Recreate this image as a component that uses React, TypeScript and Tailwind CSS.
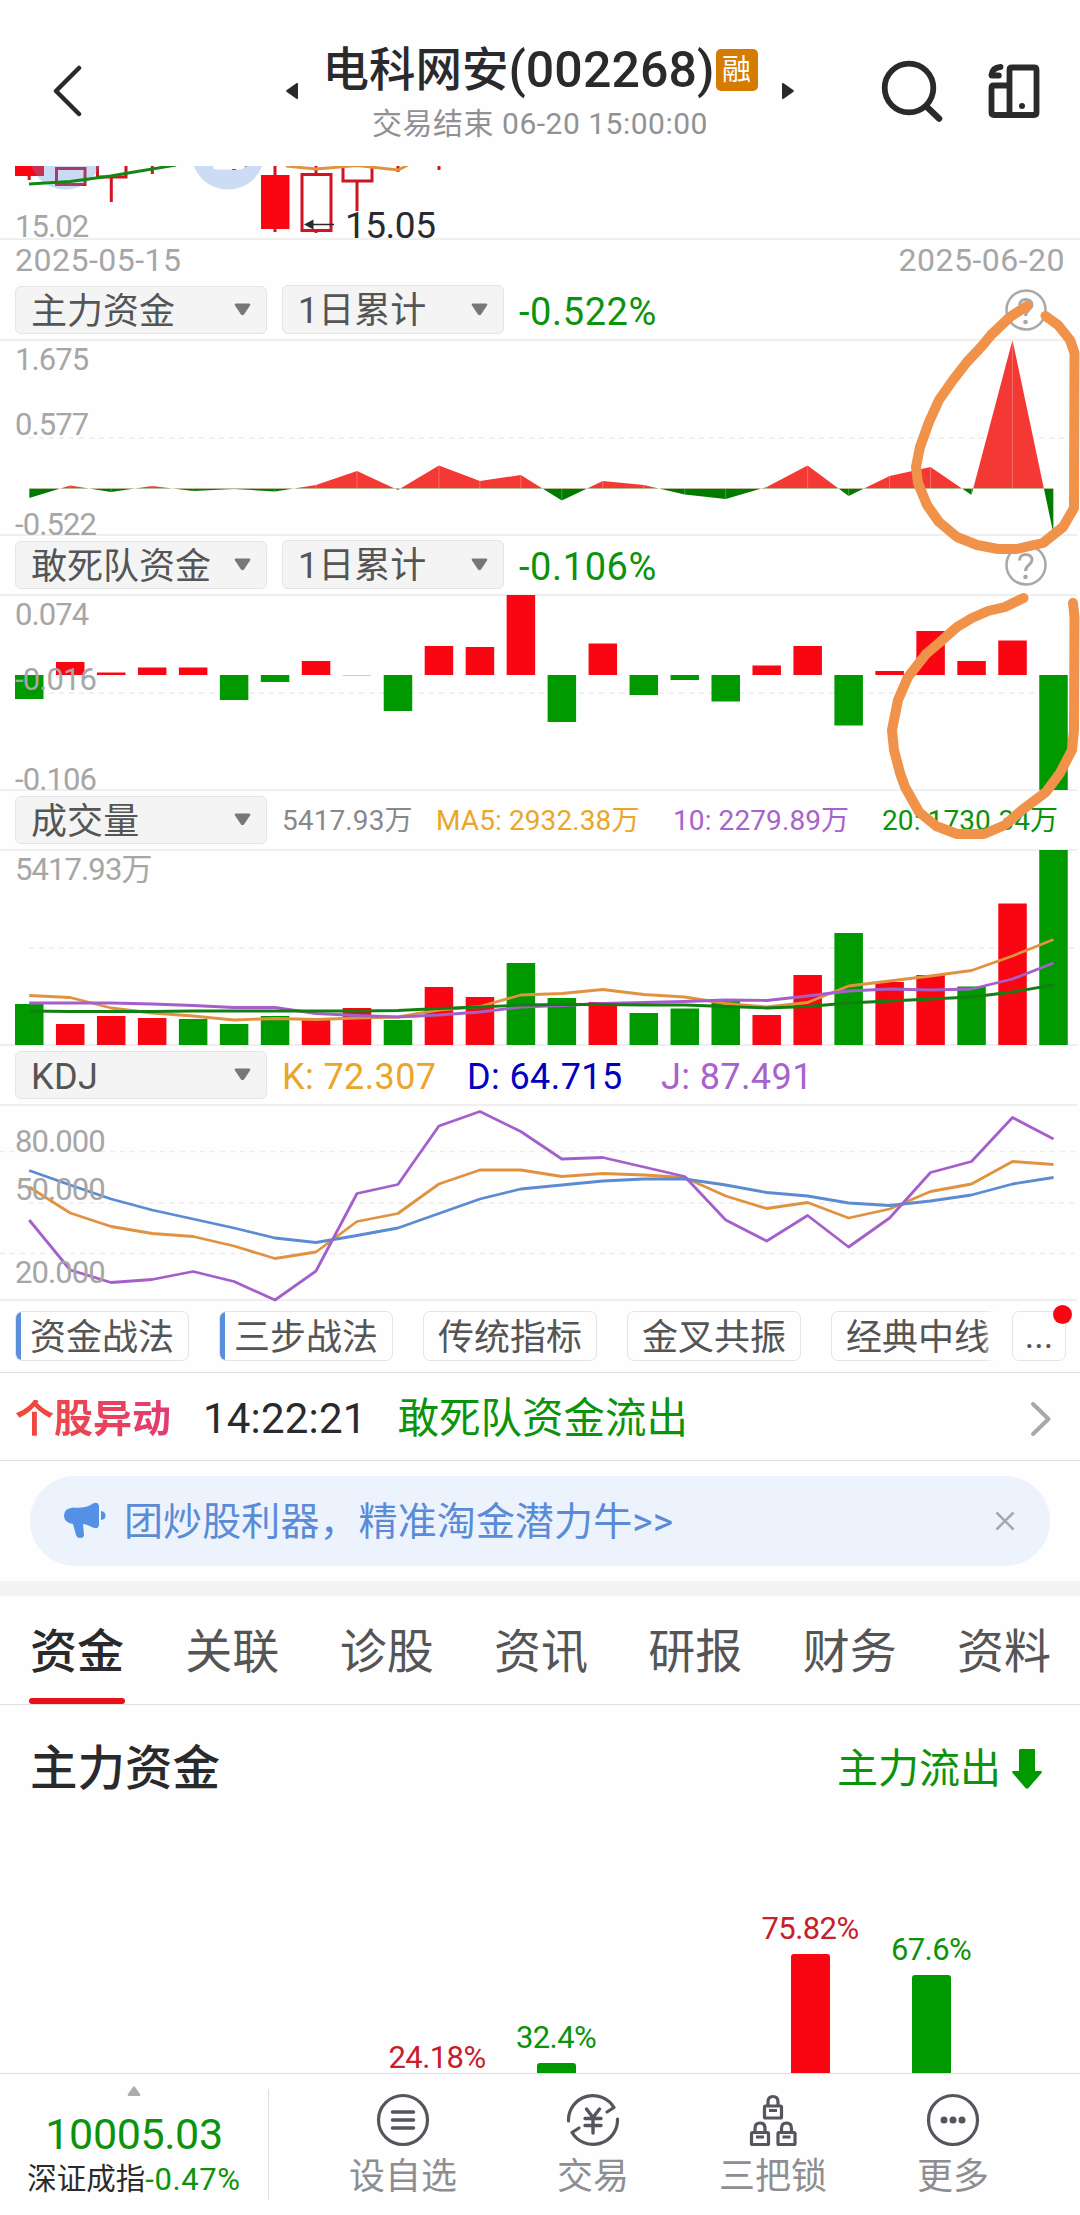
import type { ReactNode } from "react";
import clsx from "clsx";

const RED = "#fa0512";
const GREEN = "#009900";
const ORANGE = "#e1923f";
const PURPLE = "#a45fcb";
const BLUE = "#5b8bd0";

const CHART_H = 195;
const STEP = 40.97;
const cx = (i: number) => 29.2 + i * STEP;

const toPoints = (ys: number[]) => ys.map((y, i) => `${cx(i).toFixed(1)},${y}`).join(" ");

// main fund flow, zero line at 148.5
const fundFlow = [
  158, 145.5, 152, 146, 151, 149, 151.5, 145, 131, 150, 125.5, 141, 135, 160.5, 141, 145, 154.5,
  159, 147, 125.5, 156, 136, 127, 155, 0, 194,
];

// y of the free end of each bar, zero line at 80
const squadFlow = [
  104, 67, 77.5, 72.5, 72.5, 105, 87, 66, 80.3, 116, 51, 52, 0, 127, 48.5, 100, 85, 106.5, 70.5, 51,
  130.5, 76, 36, 66, 45.5, 195,
];

const volumes: [number, "r" | "g"][] = [
  [154, "g"], [174, "r"], [166, "r"], [168, "r"], [169, "g"], [174, "g"], [166, "g"], [170, "r"],
  [158, "r"], [170, "g"], [137, "r"], [147, "r"], [113, "g"], [148, "g"], [152, "r"], [163, "g"],
  [158.5, "g"], [151, "g"], [165, "r"], [125, "r"], [83, "g"], [132, "r"], [125, "r"], [136.5, "g"],
  [53.5, "r"], [0, "g"],
];

const ma5 = [
  145.5, 147.5, 158, 163, 166, 170, 168.5, 169.5, 168, 167, 160, 156.5, 145, 143.5, 139.5, 144.5,
  147, 153.5, 157, 152.5, 136, 131, 126, 120.5, 106, 89.5,
];
const ma10 = [
  153, 153, 153, 154, 155.5, 157.5, 157.5, 163.5, 165.5, 167, 165, 162, 157, 155.5, 153.5, 152.5,
  151.5, 150, 150.5, 146, 141, 139, 140, 139, 129, 113,
];
const ma20 = [
  161, 161.5, 161.5, 161.5, 161, 161, 161, 161, 161, 160.5, 158.5, 157, 155, 154.5, 154.5, 155,
  155, 156.5, 158, 156.5, 153, 151, 149, 147, 142, 135,
];

const kLine = [
  82, 108, 121.5, 128.5, 131.5, 141, 153.5, 147, 116.5, 108.5, 79, 65, 65, 71.5, 68.5, 70, 72.5,
  91, 103.5, 97.5, 113, 104, 86.5, 79, 56.5, 59.5,
];
const dLine = [
  65.5, 80, 94, 105, 114, 123, 133, 137.5, 130.5, 123, 108.5, 94, 84, 80, 76, 74, 74, 80, 87.5, 91,
  98, 100.5, 96, 90, 79, 72.5,
];
const jLine = [
  115, 165, 177.5, 174.5, 166.5, 176.5, 195, 166, 88.5, 79.5, 21, 6.5, 26.5, 54, 52.5, 62, 71.5,
  115, 136, 110.5, 142, 113, 67.5, 56.5, 12.5, 34,
];

const chips = [
  { name: "资金战法", marked: true },
  { name: "三步战法", marked: true },
  { name: "传统指标", marked: false },
  { name: "金叉共振", marked: false },
];

const tabs = ["资金", "关联", "诊股", "资讯", "研报", "财务", "资料"];

function Select({ label, wide }: { label: string; wide?: boolean }) {
  return (
    <div
      className={clsx(
        "flex items-center justify-between rounded-[6px] border border-[#e4e4e4] bg-[#f4f4f4] pl-[15px] pr-[15px] text-[36px] leading-none text-[#555]",
        wide ? "h-12 w-[252px]" : "-mt-px h-[49px] w-[222px]"
      )}>
      <span className="mt-[3px]">{label}</span>
      <svg width="17" height="13" viewBox="0 0 17 13" className="-mt-px">
        <path d="M2 0.5h13q2 0 1 2l-6 9q-1.500 1.500-3 0l-6-9q-1-2 1-2z" fill="#777779" />
      </svg>
    </div>
  );
}

function Help() {
  return (
    <svg width="42" height="42" viewBox="0 0 42 42" fill="none" stroke="#a8a8a8" className="ml-auto mr-[33px]">
      <circle cx="21" cy="21" r="19.500" strokeWidth="2.500" />
      <path d="M14.500 16.500c0-8 12.500-8 12.500-.5 0 5-6.500 5-6.500 11" strokeWidth="3" />
      <circle cx="20.500" cy="33" r="2.300" fill="#a8a8a8" stroke="none" />
    </svg>
  );
}

function Chart({ children, labels }: { children: ReactNode; labels: ReactNode }) {
  return (
    <div className="relative h-[195px]">
      <svg width="1080" height={CHART_H} className="block overflow-visible" fill="none">
        <path d="M0 0H1077M0 195H1077" stroke="#efefef" strokeWidth="2" />
        {children}
      </svg>
      {labels}
    </div>
  );
}

function AxisLabel({ className, children }: { className: string; children: ReactNode }) {
  return (
    <span className={clsx("absolute left-[15px] text-[31px] leading-none tracking-[-0.900px] text-[#a6a6a6]", className)}>
      {children}
    </span>
  );
}

function Dashes({ y, from = 29 }: { y: number; from?: number }) {
  return (
    <line x1={from} x2="1076" y1={y} y2={y} stroke="#ececec" strokeWidth="1.500" strokeDasharray="5 5" />
  );
}

function Bar({ i, y0, y1, color }: { i: number; y0: number; y1: number; color: string }) {
  return (
    <rect x={cx(i) - 14.2} y={Math.min(y0, y1)} width="28.500" height={Math.abs(y1 - y0)} fill={color} />
  );
}

function Line({ ys, color }: { ys: number[]; color: string }) {
  return <polyline points={toPoints(ys)} stroke={color} strokeWidth="2.800" strokeLinejoin="round" />;
}

function Header() {
  return (
    <header className="grid h-[166px] grid-cols-[286px_508px_286px] text-[#2a2a2c]">
      <svg width="30" height="54" viewBox="0 0 30 54" fill="none" className="ml-[53px] mt-16">
        <path d="M26 4L3 27l23 23" stroke="currentColor" strokeWidth="4.500" strokeLinecap="round" strokeLinejoin="round" />
      </svg>

      <div className="flex justify-between">
        <svg width="12" height="16" viewBox="0 0 12 16" className="mt-[83px]">
          <path d="M12 1v14q0 2-2 .5L.8 9Q-.5 8 .8 7L10 .5Q12-1 12 1z" fill="currentColor" />
        </svg>
        <div className="flex flex-col items-center pt-[43px]">
          <h1 className="flex h-[54px] items-center whitespace-nowrap text-[46.500px] font-medium leading-none">
            电科网安
            <span className="text-[50px] tracking-[0.100px]">(002268)</span>
            <span className="ml-px flex h-[42px] w-[42px] items-center justify-center rounded-[5px] bg-[#d57c00] text-[29px] font-normal text-white">
              融
            </span>
          </h1>
          <p className="mt-[12px] whitespace-nowrap text-[30px] leading-none tracking-[0.500px] text-[#919194]">
            交易结束 06-20 15:00:00
          </p>
        </div>
        <svg width="12" height="16" viewBox="0 0 12 16" className="mt-[83px]">
          <path d="M0 1v14q0 2 2 .5L11.200 9q1.300-1 0-2L2 .5Q0-1 0 1z" fill="currentColor" />
        </svg>
      </div>

      <div className="flex pl-[87px] pt-[60px]">
        <svg width="64" height="64" viewBox="0 0 64 64" fill="none" stroke="currentColor">
          <circle cx="28" cy="28" r="24.300" strokeWidth="5.800" />
          <path d="M46.500 47.500L58 58.500" strokeWidth="6.500" strokeLinecap="round" />
        </svg>
        <svg width="58" height="60" viewBox="0 0 58 60" fill="none" stroke="currentColor" strokeWidth="5.800" className="ml-[40px]">
          <path d="M24.500 55V10q0-2.500 2.500-2.500h22q2.500 0 2.500 2.500v42.500q0 2.500-2.500 2.500H9q-2.500 0-2.500-2.500V28q0-2.500 2.500-2.500h15.500" />
          <circle cx="37" cy="46" r="3" fill="currentColor" stroke="none" />
          <path d="M15.500 7Q7.500 7.500 6.500 15" strokeLinecap="round" />
          <path d="M6.800 15.500h7" strokeLinecap="round" />
        </svg>
      </div>
    </header>
  );
}

// lowest strip of the candle chart, the rest is scrolled away
function CandleStrip() {
  return (
    <div className="relative h-[72px]">
      <svg width="1080" height="72" viewBox="0 166 1080 72" className="block overflow-hidden" fill="none">
        <rect x="15" y="160" width="29" height="16" fill={RED} />
        <g stroke="#d01522" strokeWidth="3">
          <path d="M29.200 176V180M111.300 177V202M152.300 166V174M275 166V232M316 166V174M316 231V233M357 181V211M398 166V172M439 166V170" />
          <rect x="56.500" y="168.500" width="28.500" height="16" />
          <rect x="97.500" y="150" width="28.500" height="27" />
          <rect x="302" y="174.500" width="29" height="56" />
          <rect x="343" y="150" width="29" height="31" />
        </g>
        <rect x="261" y="175" width="28.500" height="54" fill={RED} />
        <circle cx="65.500" cy="153" r="36.600" fill="#5a8fe0" fillOpacity="0.320" />
        <circle cx="228" cy="153" r="36.600" fill="#ccdcf5" />
        <path d="M213 166h31q0 3.500-4 3.500h-23q-4 0-4-3.500z" fill="#fff" />
        <path d="M232 169.500h4M245 166h2" stroke="#b03a62" />
        <polyline points="29,184 70,181.500 111,176 134,172 176,165" stroke="#118811" strokeWidth="2.800" />
        <polyline points="286,166 316,169 357,165.500 398,170 408,165" stroke={ORANGE} strokeWidth="2.800" />
        <path d="M312 224.500h22" stroke="#2a2a2c" strokeWidth="1.500" />
        <path d="M304 224.500l9.500-5v10z" fill="#2a2a2c" />
      </svg>
      <AxisLabel className="top-[45px]">15.02</AxisLabel>
      <span className="absolute left-[345px] top-[41px] text-[37px] leading-none tracking-[-0.500px] text-[#2a2a2c]">
        15.05
      </span>
    </div>
  );
}

function FundFlowChart() {
  const outline = `29.200,148.500 ${toPoints(fundFlow)} ${cx(25)},148.500`;
  return (
    <Chart
      labels={
        <>
          <AxisLabel className="top-[4px]">1.675</AxisLabel>
          <AxisLabel className="top-[69px]">0.577</AxisLabel>
          <AxisLabel className="top-[169px]">-0.522</AxisLabel>
        </>
      }>
      <clipPath id="inflow">
        <rect width="1080" height="148.500" />
      </clipPath>
      <clipPath id="outflow">
        <rect y="148.500" width="1080" height="47" />
      </clipPath>
      <Dashes y={98} />
      <polygon points={outline} fill="#f43833" clipPath="url(#inflow)" />
      <polygon points={outline} fill="#007b00" clipPath="url(#outflow)" />
      {fundFlow.map((y, i) => (
        <line key={i} x1={cx(i)} x2={cx(i)} y1={y} y2="148.500" stroke="#fff" strokeOpacity="0.350" strokeWidth="0.800" />
      ))}
    </Chart>
  );
}

function SquadChart() {
  return (
    <Chart
      labels={
        <>
          <AxisLabel className="top-[4px]">0.074</AxisLabel>
          <AxisLabel className="top-[69px]">-0.016</AxisLabel>
          <AxisLabel className="top-[169px]">-0.106</AxisLabel>
        </>
      }>
      <Dashes y={98} />
      {squadFlow.map((y, i) => (
        <Bar key={i} i={i} y0={80} y1={y} color={y < 80 ? RED : GREEN} />
      ))}
    </Chart>
  );
}

function VolumeChart() {
  return (
    <Chart labels={<AxisLabel className="top-[4px]">5417.93万</AxisLabel>}>
      <Dashes y={98} />
      {volumes.map(([y, side], i) => (
        <Bar key={i} i={i} y0={CHART_H} y1={y} color={side === "r" ? RED : GREEN} />
      ))}
      <Line ys={ma5} color={ORANGE} />
      <Line ys={ma10} color={PURPLE} />
      <Line ys={ma20} color="#118011" />
    </Chart>
  );
}

function KdjChart() {
  return (
    <Chart
      labels={
        <>
          <AxisLabel className="top-[21px]">80.000</AxisLabel>
          <AxisLabel className="top-[69px]">50.000</AxisLabel>
          <AxisLabel className="top-[152px]">20.000</AxisLabel>
        </>
      }>
      <Dashes y={46.5} from={0} />
      <Dashes y={98} />
      <Dashes y={148.5} from={0} />
      <Line ys={kLine} color={ORANGE} />
      <Line ys={dLine} color={BLUE} />
      <Line ys={jLine} color={PURPLE} />
    </Chart>
  );
}

// freehand marker drawn over the charts
function Marker() {
  return (
    <svg
      width="1080"
      height="560"
      viewBox="0 290 1080 560"
      fill="none"
      stroke="#f0924a"
      strokeWidth="10"
      strokeLinecap="round"
      strokeLinejoin="round"
      className="pointer-events-none absolute left-0 top-[290px]">
      <path d="M1027 306L1010 317L991 335L982 346L967 362L953 380L939 400L929 422L920 447L916 467L918 483L927 505L939 522L957 537L977 545L998 549L1017 549L1043 543L1063 527L1074 508L1074.500 353L1070 340L1058 325L1045.500 316" />
      <path d="M1023.500 598L1005 607L988 611L972 618L957 627L939 643L926 654L908 677L898 700L892 730L894 750L900 773L905 787L919 812L936 826L957 834L984 834L1005 825L1022 810L1046 792L1060 773L1072 750L1074 730L1074.500 617L1073 603" />
    </svg>
  );
}

function Lock({ x, y }: { x: number; y: number }) {
  return (
    <g transform={`translate(${x} ${y})`}>
      <rect x="1.500" y="11" width="17" height="12" rx="1" />
      <path d="M5 11V7q0-5.500 5-5.500t5 5.500v4M6 15.500h8" />
    </g>
  );
}

function BottomBar() {
  const item = "flex flex-col items-center gap-[12px] pt-[19px]";
  return (
    <footer className="flex h-[142px] border-t border-[#dedede] text-[36px] leading-none text-[#8e8e92]">
      <div className="flex w-[268px] flex-col items-center">
        <svg width="14" height="10" viewBox="0 0 14 10" className="mt-3">
          <path d="M6 1q1-1.500 2 0l5 7q1 2-1 2H2q-2 0-1-2z" fill="#ababab" />
        </svg>
        <div className="mt-[17px] text-[43px] text-[#0b930b] tracking-[-0.400px]">10005.03</div>
        <div className="mt-2 flex items-center text-[29.500px] text-[#2a2a2c]">
          深证成指<span className="text-[31px] tracking-[0.600px] text-[#0b930b]">-0.47%</span>
        </div>
      </div>
      <div className="mt-[15px] h-[111px] w-px bg-[#dedede]" />
      <nav className="ml-[39px] flex">
        <div className={clsx(item, "w-[190px]")}>
          <svg width="54" height="54" viewBox="0 0 54 54" fill="none" stroke="#55555e" strokeWidth="3.200">
            <circle cx="27" cy="27" r="24.500" />
            <path d="M16.500 19h21M16.500 27h21M16.500 35h21" strokeWidth="3.500" strokeLinecap="round" />
          </svg>
          设自选
        </div>
        <div className={clsx(item, "w-[190px]")}>
          <svg width="54" height="54" viewBox="0 0 54 54" fill="none" stroke="#55555e" strokeWidth="3.200" strokeLinecap="round">
            <path d="M2.500 28A24.500 24.500 0 0 1 48 14.500L41 19" strokeLinejoin="round" />
            <path d="M51.500 26A24.500 24.500 0 0 1 6 39.500L13 35" strokeLinejoin="round" />
            <path d="M20.500 16L27 24.500 33.500 16M27 24.500V40M19 25.500h16M19 32.500h16" strokeWidth="3.400" />
          </svg>
          交易
        </div>
        <div className={clsx(item, "w-[170px]")}>
          <svg width="54" height="54" viewBox="0 0 54 54" fill="none" stroke="#55555e" strokeWidth="3.200">
            <Lock x={17} y={2} />
            <Lock x={4} y={28.5} />
            <Lock x={30.5} y={28.5} />
          </svg>
          三把锁
        </div>
        <div className={clsx(item, "w-[190px]")}>
          <svg width="54" height="54" viewBox="0 0 54 54" fill="none" stroke="#55555e" strokeWidth="3.200">
            <circle cx="27" cy="27" r="24.500" />
            <path d="M18 27h.01M27 27h.01M36 27h.01" strokeWidth="7" strokeLinecap="round" />
          </svg>
          更多
        </div>
      </nav>
    </footer>
  );
}

function FlowBar({ pct, up, className }: { pct: string; up?: boolean; className: string }) {
  return (
    <div className={clsx("flex w-[110px] flex-col items-center", className)}>
      <span className={clsx("text-[31px] leading-none tracking-[-0.600px]", up ? "text-[#c8202a]" : "text-[#0b930b]")}>
        {pct}
      </span>
      <div className={clsx("mt-[10px] w-[39px] flex-1 rounded-t-[3px]", up ? "bg-[#fa0512]" : "bg-[#009900]")} />
    </div>
  );
}

export default function App() {
  return (
    <div className="relative flex h-[2215px] w-[1080px] flex-col overflow-hidden bg-[#fefefe] font-[Roboto,'Noto_Sans_CJK_SC',sans-serif]">
      <Header />
      <CandleStrip />
      <div className="flex h-[42px] items-center justify-between border-t-2 border-[#efefef] px-[15px] text-[32px] leading-none tracking-[0.500px] text-[#a6a6a6]">
        <span>2025-05-15</span>
        <span>2025-06-20</span>
      </div>

      <div className="flex h-[60px] items-center gap-[15px] pl-[15px]">
        <Select label="主力资金" wide />
        <Select label="1日累计" />
        <span className="mt-1 text-[38px] leading-none tracking-[0.600px] text-[#0b930b]">-0.522%</span>
        <Help />
      </div>
      <FundFlowChart />

      <div className="flex h-[60px] items-center gap-[15px] pl-[15px]">
        <Select label="敢死队资金" wide />
        <Select label="1日累计" />
        <span className="mt-1 text-[38px] leading-none tracking-[0.600px] text-[#0b930b]">-0.106%</span>
        <Help />
      </div>
      <SquadChart />

      <div className="flex h-[60px] items-center pl-[15px] text-[28px] leading-none tracking-[0.100px]">
        <Select label="成交量" wide />
        <span className="ml-[15px] mt-0.5 w-[154px] text-[#888]">5417.93万</span>
        <span className="mt-0.5 w-[237px] text-[#eba62a]">MA5: 2932.38万</span>
        <span className="mt-0.5 w-[209px] text-[#a862cc]">10: 2279.89万</span>
        <span className="mt-0.5 text-[#0b930b]">20: 1730.34万</span>
      </div>
      <VolumeChart />

      <div className="flex h-[60px] items-center pl-[15px] text-[36px] leading-none tracking-[0.400px]">
        <Select label="KDJ" wide />
        <span className="ml-[15px] mt-[3px] w-[185px] text-[#eba62a]">K: 72.307</span>
        <span className="mt-[3px] w-[194px] text-[#0000c0]">D: 64.715</span>
        <span className="mt-[3px] text-[#a862cc]">J: 87.491</span>
      </div>
      <KdjChart />

      <div className="flex h-[73px] border-b border-[#dedede] pl-[15px] pt-[11px] text-[36px] leading-none text-[#555]">
        <div className="relative flex w-[981px] gap-[30px] overflow-hidden">
          {chips.map((chip) => (
            <div
              key={chip.name}
              className="relative flex h-[50px] w-[174px] shrink-0 items-center justify-center overflow-hidden rounded-[7px] border border-[#e4e4e4]">
              {chip.marked && <i className="absolute inset-y-0 left-0 w-[5px] bg-[#5b8fdc]" />}
              <span className="mt-[3px]">{chip.name}</span>
            </div>
          ))}
          <div className="flex h-[50px] w-[174px] shrink-0 items-center justify-center rounded-[7px] border border-[#e4e4e4]">
            <span className="mt-[3px]">经典中线</span>
          </div>
          <div className="absolute right-0 top-0 h-[50px] w-3.5 bg-gradient-to-r from-transparent to-[#fefefe]" />
        </div>
        <div className="relative ml-4 flex h-[50px] w-[54px] items-center justify-center rounded-[7px] border border-[#e4e4e4]">
          <span>...</span>
          <i className="absolute -right-[7px] -top-[7px] h-[19px] w-[19px] rounded-full bg-[#fa0512]" />
        </div>
      </div>

      <div className="flex h-[88px] items-center border-b border-[#dedede] px-[15px] leading-none">
        <span className="mt-[5px] bg-gradient-to-r from-[#f04a33] to-[#e23b74] bg-clip-text text-[39px] font-bold text-transparent">
          个股异动
        </span>
        <span className="ml-[32px] mt-[5px] text-[42px] tracking-[0.200px] text-[#2a2a2c]">14:22:21</span>
        <span className="ml-[31px] mt-[5px] text-[41.500px] text-[#0b930b]">敢死队资金流出</span>
        <svg width="22" height="36" viewBox="0 0 22 36" fill="none" className="ml-auto mr-[13px] mt-1">
          <path d="M3 3l15.500 15L3 33" stroke="#a8a8a8" strokeWidth="4" strokeLinecap="round" strokeLinejoin="round" />
        </svg>
      </div>

      <div className="px-[30px] py-[15px]">
        <div className="flex h-[90px] items-center rounded-full bg-[#ecf3fc] pl-[33px] pr-[35px] text-[39px] leading-none text-[#5b8bd6]">
          <svg width="44" height="38" viewBox="0 0 44 38" fill="#5490e6">
            <path d="M10 5.500Q22 7 30 1.500Q35-1 36 4V23Q35 28 30 25.500Q26 23 20 22L21 33Q21 36 17 36Q14 36 13 33L10 22Q1 20.500 1 13.500T10 5.500z" />
            <path d="M38 9q4.500.5 4.500 4.500T38 18z" />
          </svg>
          <span className="ml-[17px] mt-0.5 tracking-[0.100px]">团炒股利器，精准淘金潜力牛&gt;&gt;</span>
          <svg width="20" height="20" viewBox="0 0 20 20" className="ml-auto">
            <path d="M1.500 1.500l17 17M18.500 1.500l-17 17" stroke="#a8a8a8" strokeWidth="2.500" />
          </svg>
        </div>
      </div>
      <div className="h-[15px] bg-[#f4f4f4]" />

      <div className="flex h-[109px] justify-between border-b border-[#dedede] px-[29px] text-[47px] leading-none text-[#555]">
        {tabs.map((tab, i) => (
          <div key={tab} className={clsx("flex flex-col items-center pt-[32px]", i === 0 && "font-medium text-[#2a2a2c]")}>
            {tab}
            {i === 0 && <i className="mt-auto h-1.5 w-24 rounded-[3px] bg-[#e90e17]" />}
          </div>
        ))}
      </div>

      <div className="flex h-[128px] items-center justify-between pl-[30px] pr-[38px] leading-none">
        <h2 className="mt-0.5 text-[47.500px] font-medium text-[#2a2a2c]">主力资金</h2>
        <div className="mt-px flex items-center text-[41px] text-[#0b930b]">
          主力流出
          <svg width="30" height="40" viewBox="0 0 30 40" className="-mt-0.5 ml-[11px]">
            <path d="M9 0h13q1 0 1 1v21h6q1.500 0 .5 2L16.500 39q-1.500 1.500-3 0L.5 24q-1-2 .5-2h6V1q0-1 2-1z" fill={GREEN} />
          </svg>
        </div>
      </div>

      <div className="flex flex-1 overflow-hidden">
        <FlowBar pct="24.18%" up className="ml-[382px] mt-[209px]" />
        <FlowBar pct="32.4%" className="ml-[9px] mt-[189px]" />
        <FlowBar pct="75.82%" up className="ml-[144px] mt-[80px]" />
        <FlowBar pct="67.6%" className="ml-[11px] mt-[101px]" />
      </div>

      <BottomBar />
      <Marker />
    </div>
  );
}
